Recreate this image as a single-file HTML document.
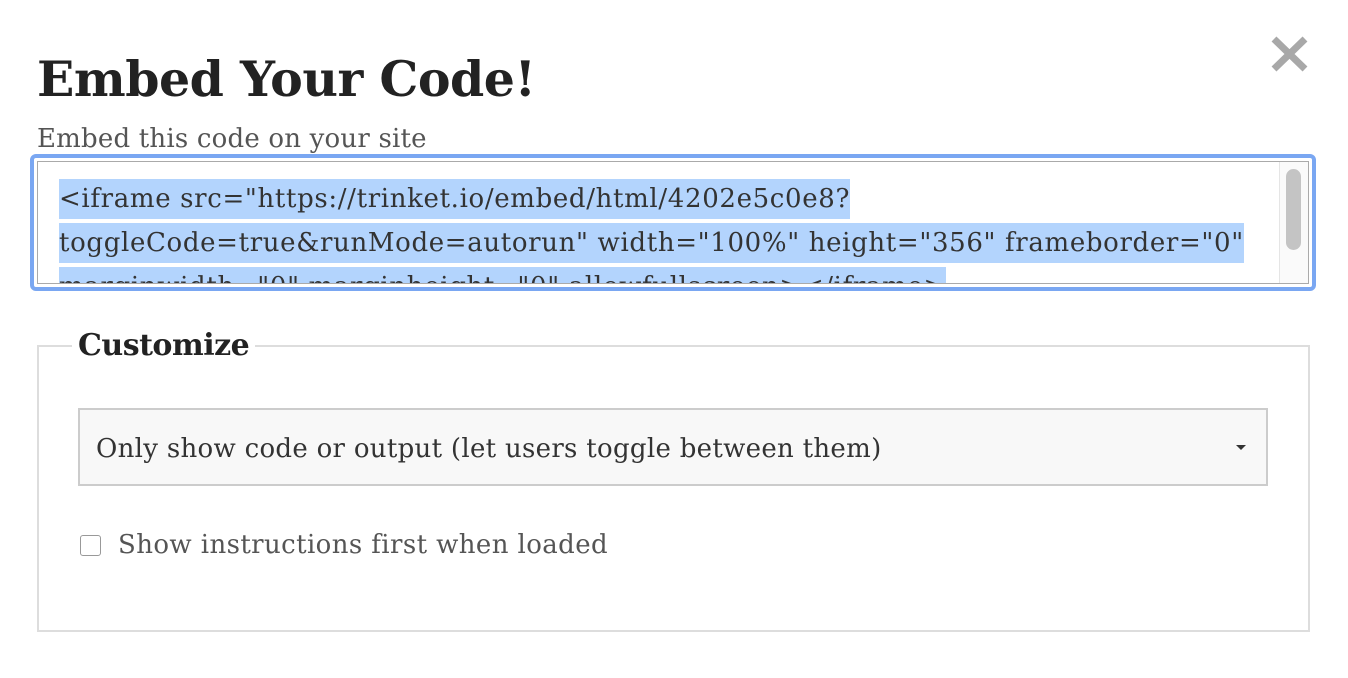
<!DOCTYPE html>
<html><head><meta charset="utf-8"><style>
body{margin:0;width:1348px;height:678px;background:#fff;font-family:"DejaVu Serif","Liberation Serif",serif;color:#333;position:relative;overflow:hidden}
.a{position:absolute;white-space:nowrap}
h1{position:absolute;left:37px;top:43px;margin:0;font-size:49px;font-weight:bold;color:#222;letter-spacing:-0.5px;line-height:72px}
.sub{left:37px;top:124px;font-size:26px;color:#555;letter-spacing:0.2px}
.ring{position:absolute;left:30px;top:154px;width:1286px;height:137px;border:4px solid #7aa7f2;border-radius:6px;box-sizing:border-box}
.ta{position:absolute;left:37px;top:161px;width:1272px;height:123px;border:1px solid #aaa;box-sizing:border-box;overflow:hidden;background:#fff}
.ln{position:absolute;left:21px;font-size:26px;letter-spacing:0.65px;background:#b3d4fd;color:#333;line-height:40px;height:40px}
.sb{position:absolute;right:0;top:0;width:28px;height:100%;background:#fafafa;border-left:1px solid #e5e5e5}
.sb i{position:absolute;left:6px;top:7px;width:15px;height:81px;background:#c4c4c4;border-radius:8px}
.fs{position:absolute;left:37px;top:345px;width:1273px;height:287px;border:2px solid #ddd;box-sizing:border-box}
.lg{left:72px;top:328px;background:#fff;padding:0 6px;font-size:30px;font-weight:bold;color:#222;letter-spacing:-0.5px}
.sel{position:absolute;left:78px;top:408px;width:1190px;height:78px;background:#f8f8f8;border:2px solid #ccc;box-sizing:border-box}
.sel span{position:absolute;left:16px;top:24px;font-size:26px;color:#333;letter-spacing:0.3px;white-space:nowrap}
.car{position:absolute;left:1236px;top:445px;width:0;height:0;border-left:5px solid transparent;border-right:5px solid transparent;border-top:5px solid #333}
.cb{position:absolute;left:80px;top:535px;width:21px;height:21px;border:1px solid #999;border-radius:3px;box-sizing:border-box;background:#fff}
.cl{left:118px;top:530px;font-size:26px;color:#555;letter-spacing:0.4px}
</style></head><body>
<h1>Embed Your Code!</h1>
<svg class="a" style="left:1270px;top:35px" width="39" height="38" viewBox="0 0 39 38"><path d="M4 4L35 34M35 4L4 34" stroke="#a8a8a8" stroke-width="7"/></svg>
<div class="a sub">Embed this code on your site</div>
<div class="ring"></div>
<div class="ta">
<div class="ln" style="top:17px">&lt;iframe src="https://trinket.io/embed/html/4202e5c0e8?</div>
<div class="ln" style="top:61px">toggleCode=true&amp;runMode=autorun" width="100%" height="356" frameborder="0"</div>
<div class="ln" style="top:105px">marginwidth="0" marginheight="0" allowfullscreen&gt;&lt;/iframe&gt;</div>
<div class="sb"><i></i></div>
</div>
<div class="fs"></div>
<div class="a lg">Customize</div>
<div class="sel"><span>Only show code or output (let users toggle between them)</span></div>
<div class="car"></div>
<div class="cb"></div>
<div class="a cl">Show instructions first when loaded</div>
</body></html>
